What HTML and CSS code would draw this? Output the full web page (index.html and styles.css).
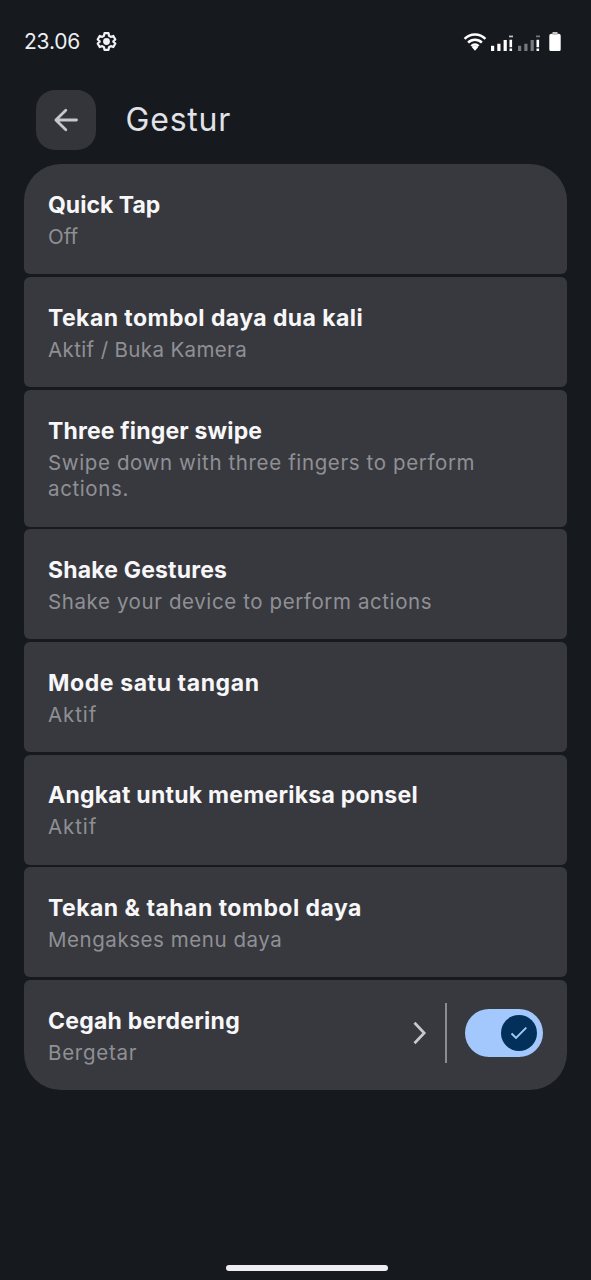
FILE: index.html
```html
<!DOCTYPE html>
<html lang="id">
<head>
<meta charset="utf-8">
<title>Gestur</title>
<link rel="stylesheet" href="styles.css">
</head>
<body>
<header class="status">
  <span class="clock">23.06</span>
  <svg class="gear" width="21" height="21" viewBox="0 0 24 24"><path d="M9.700 2.500h4.600l.6 3 2 1.200 2.900-1 2.300 4-2.300 2v.6l2.300 2-2.300 4-2.900-1-2 1.200-.6 3H9.700l-.6-3-2-1.200-2.900 1-2.300-4 2.300-2v-.6l-2.300-2 2.300-4 2.900 1 2-1.200z" fill="none" stroke="#f1f2f5" stroke-width="2.500" stroke-linejoin="round"/><circle cx="12" cy="12" r="3.900" fill="#f1f2f5"/></svg>
  <svg class="indicators" width="100" height="24" viewBox="0 0 100 24">
    <g fill="none" stroke="#fff" stroke-width="2.500"><path d="M1.600 8.900a14.500 14.500 0 0 1 20.800 0M5.100 12.700a9.600 9.600 0 0 1 13.800 0M8.400 16.100a5 5 0 0 1 7.200 0"/></g>
    <path d="M8.900 17.200a4.500 4.500 0 0 1 6.200 0L12 20.700z" fill="#fff"/>
    <g fill="#fff"><path d="M28 15.700h3.200v5.300h-3.200zM34.300 13.700h3.200v7.300h-3.200zM40.600 10h3.200v11h-3.200zM46.500 9.700h2.600v7.600h-2.600zM46.500 18.400h2.600v2.600h-2.600z"/><path d="M46 5.600h4v1.700h-4z" opacity=".75"/><path d="M73.500 9.700h2.600v7.600h-2.600zM73.500 18.400h2.600v2.600h-2.600z"/></g>
    <g fill="#77797d"><path d="M55 15.700h3.200v5.300h-3.200zM61.300 13.700h3.200v7.300h-3.200zM67.600 10h3.200v11h-3.200zM73 5.600h4v1.700h-4z"/></g>
    <path d="M89.500 4.200h5v-2h-5zM88.300 3.800h7.400a2 2 0 0 1 2 2v13.700a1.500 1.500 0 0 1-1.500 1.500h-8.400a1.500 1.500 0 0 1-1.500-1.500V5.800a2 2 0 0 1 2-2z" fill="#fff"/>
  </svg>
</header>
<div class="topbar">
  <button class="back" aria-label="Kembali"><svg width="26" height="26" viewBox="0 0 26 26"><path d="M23.500 13H3M12.800 3.200 2.900 13l9.900 9.800" fill="none" stroke="#c6c8d0" stroke-width="2.800" stroke-linecap="round" stroke-linejoin="round"/></svg></button>
  <h1 class="heading">Gestur</h1>
</div>
<main class="list">
  <section class="card"><h2 class="title"><span class="t1">Quick Tap</span></h2><p class="sub"><span class="s1">Off</span></p></section>
  <section class="card"><h2 class="title"><span class="t2">Tekan tombol daya dua kali</span></h2><p class="sub"><span class="s2">Aktif / Buka Kamera</span></p></section>
  <section class="card"><h2 class="title"><span class="t3">Three finger swipe</span></h2><p class="sub"><span class="s3">Swipe down with three fingers to perform<br>actions.</span></p></section>
  <section class="card"><h2 class="title"><span class="t4">Shake Gestures</span></h2><p class="sub"><span class="s4">Shake your device to perform actions</span></p></section>
  <section class="card"><h2 class="title"><span class="t5">Mode satu tangan</span></h2><p class="sub"><span class="s5">Aktif</span></p></section>
  <section class="card"><h2 class="title"><span class="t6">Angkat untuk memeriksa ponsel</span></h2><p class="sub"><span class="s5">Aktif</span></p></section>
  <section class="card"><h2 class="title"><span class="t7">Tekan &amp; tahan tombol daya</span></h2><p class="sub"><span class="s7">Mengakses menu daya</span></p></section>
  <section class="card split">
    <div class="text"><h2 class="title"><span class="t8">Cegah berdering</span></h2><p class="sub"><span class="s8">Bergetar</span></p></div>
    <div class="controls">
      <svg class="chevron" width="16" height="26" viewBox="0 0 16 26"><path d="M2.500 2.800 12.200 13 2.500 23.200" fill="none" stroke="#c9c8ce" stroke-width="2.700"/></svg>
      <span class="divider"></span>
      <span class="switch"><span class="thumb"><svg width="18" height="14" viewBox="0 0 18 14"><path d="m1.500 7.500 4.500 4.500L16.300 1.700" fill="none" stroke="#a4c8fc" stroke-width="1.900"/></svg></span></span>
    </div>
  </section>
</main>
<div class="homebar"></div>
</body>
</html>
```
FILE: styles.css
```css
* { box-sizing: border-box; }
body {
  margin: 0;
  width: 591px;
  height: 1280px;
  overflow: hidden;
  display: flex;
  flex-direction: column;
  background: #16191e;
  font-family: Inter, "Noto Sans", sans-serif;
}
.status {
  display: flex;
  align-items: center;
  height: 83px;
  padding: 0 28px 0 24px;
}
.clock { color: #eceef2; font-size: 21px; letter-spacing: -0.2px; }
.gear { margin-left: 16px; }
.indicators { margin-left: auto; }
.topbar {
  display: flex;
  align-items: center;
  height: 60px;
  margin-top: 7px;
  padding-left: 36px;
}
.back {
  display: grid;
  place-items: center;
  width: 60px;
  height: 60px;
  padding: 0;
  border: 0;
  border-radius: 19px;
  background: #33353b;
}
.heading {
  margin: 0 0 0 29.500px;
  font-size: 32px;
  font-weight: 400;
  line-height: 60px;
  letter-spacing: 0.8px;
  color: #e1e2e8;
}
.list {
  display: flex;
  flex-direction: column;
  gap: 2.600px;
  margin: 14.400px 24px 0;
}
.card {
  padding: 24.800px 24px 23.600px;
  border-radius: 6px;
  background: #38393e;
}
.card:first-child { border-radius: 37px 37px 6px 6px; }
.card:last-child { border-radius: 6px 6px 37px 37px; }
.title {
  margin: 0;
  font-size: 23px;
  font-weight: 650;
  line-height: 32px;
  color: #f7f7f9;
  white-space: nowrap;
}
.sub {
  margin: 3px 0 0;
  font-size: 20.500px;
  font-weight: 400;
  line-height: 26.700px;
  color: #8f9095;
  white-space: nowrap;
}
.t2 { letter-spacing: 0.43px; }
.t3 { letter-spacing: 0.17px; }
.t4 { letter-spacing: 0.17px; }
.t5 { letter-spacing: 0.6px; }
.t6 { letter-spacing: 0.25px; }
.t7 { letter-spacing: 0.48px; }
.t8 { letter-spacing: 0.25px; }
.s2 { letter-spacing: 0.37px; }
.s3 { letter-spacing: 0.62px; }
.s4 { letter-spacing: 0.6px; }
.s5 { letter-spacing: 0.9px; }
.s7 { letter-spacing: 0.55px; }
.s8 { letter-spacing: 0.75px; }
.split {
  display: flex;
  align-items: center;
}
.text { flex: 1; }
.controls {
  display: flex;
  align-items: center;
  margin-top: -5px;
}
.divider {
  width: 2px;
  height: 60px;
  margin: 0 18px 0 17px;
  background: #8b8c92;
}
.switch {
  display: flex;
  align-items: center;
  justify-content: flex-end;
  width: 78px;
  height: 48px;
  padding-right: 6px;
  border-radius: 24px;
  background: #a3c8fd;
}
.thumb {
  display: grid;
  place-items: center;
  width: 36px;
  height: 36px;
  border-radius: 50%;
  background: #03305a;
}
.homebar {
  width: 162px;
  height: 6px;
  margin: auto auto 9px 226px;
  border-radius: 3px;
  background: #eeedf2;
}
```
